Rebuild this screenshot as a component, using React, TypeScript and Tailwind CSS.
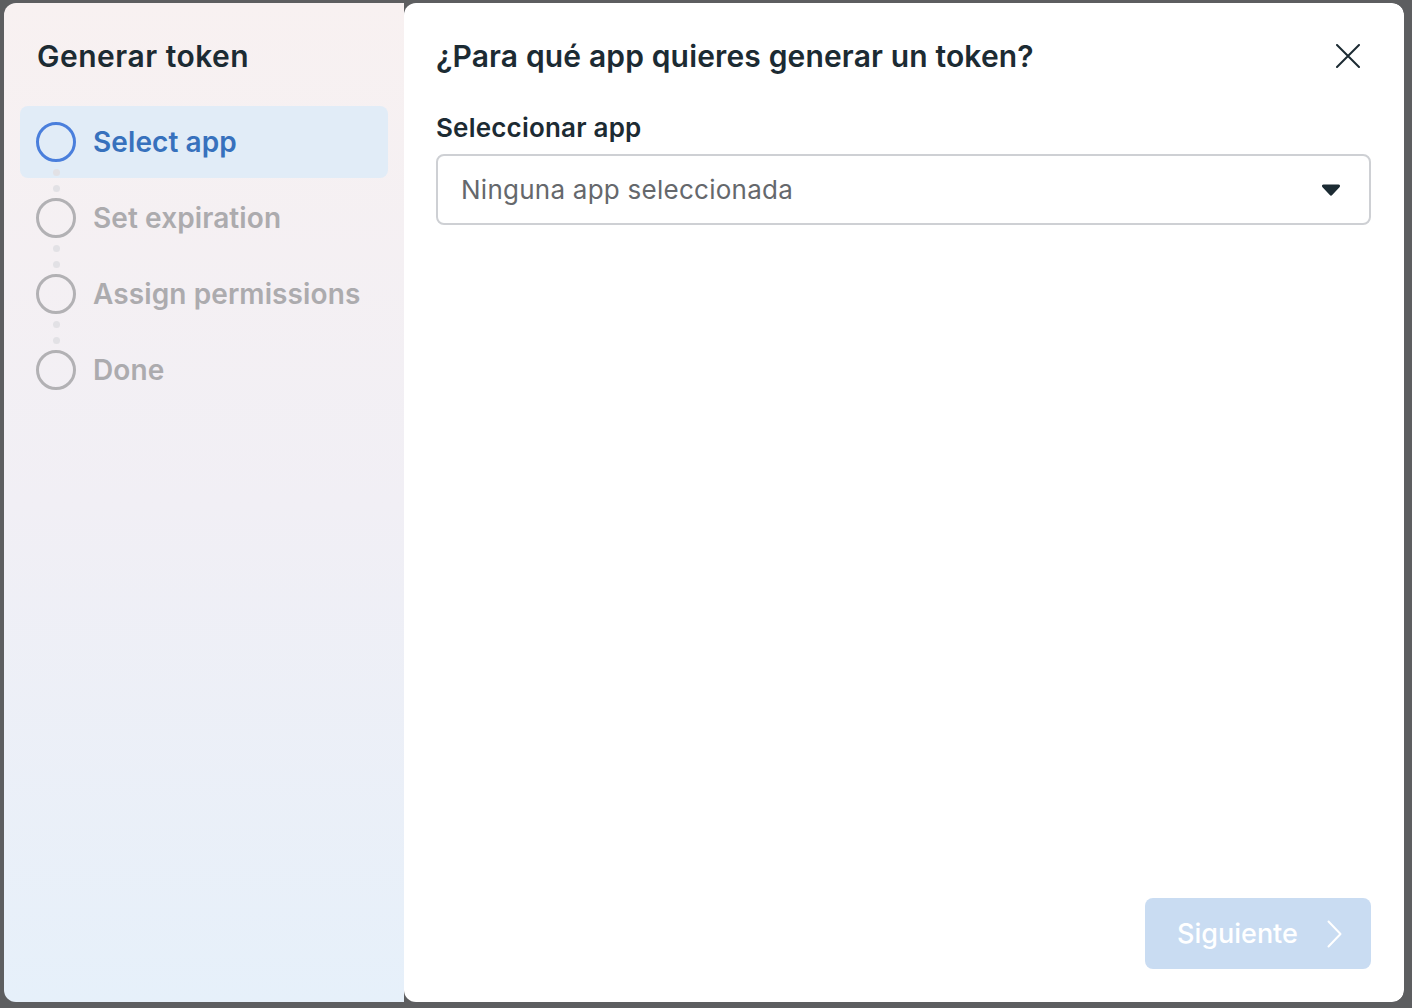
const steps = [
  { name: "Select app", active: true },
  { name: "Set expiration", active: false },
  { name: "Assign permissions", active: false },
  { name: "Done", active: false },
]

function StepRow({ name, active, last }: { name: string; active: boolean; last: boolean }) {
  return (
    <div
      className={`relative flex h-[72px] items-center gap-[17px] rounded-[8px] pl-[16px] ${
        active ? "bg-[#e1ecf7]" : ""
      }`}
    >
      <div
        className={`h-[40px] w-[40px] shrink-0 rounded-full border-[3px] ${
          active ? "border-[#4a7fdc]" : "border-[#b2b1b4]"
        }`}
      />
      <span
        className={`text-[28px] font-semibold leading-[36px] tracking-[0.1px] ${
          active ? "text-[#3771bd]" : "text-[#acabae]"
        }`}
      >
        {name}
      </span>
      {!last && (
        <>
          <div className="absolute left-[33px] top-[63px] h-[7px] w-[7px] rounded-full bg-[#e2e1e5]" />
          <div className="absolute left-[33px] top-[79px] h-[7px] w-[7px] rounded-full bg-[#e2e1e5]" />
        </>
      )}
    </div>
  )
}

export default function App() {
  return (
    <div
      className="h-screen w-full bg-[#5d5e60] pl-[4px] pt-[3px]"
      style={{ fontFamily: "Inter, 'Noto Sans', sans-serif" }}
    >
      <div className="flex h-[999px] w-[1400px] overflow-hidden rounded-[12px]">
        {/* steps */}
        <div className="flex w-[400px] shrink-0 flex-col bg-linear-to-b from-[#f8f1f1] via-[#f1eff5] to-[#e6f0fa] px-[16px] pt-[35px]">
          <h2 className="pl-[17px] text-[30px] font-semibold leading-[36px] tracking-[0.5px] text-[#1c2b33]">
            Generar token
          </h2>
          <div className="mt-[32px] flex w-[368px] flex-col gap-[4px]">
            {steps.map((s, i) => (
              <StepRow key={s.name} name={s.name} active={s.active} last={i === steps.length - 1} />
            ))}
          </div>
        </div>

        {/* content */}
        <div className="flex flex-1 flex-col rounded-[12px] bg-white pb-[33px] pl-[32px] pr-[33px] pt-[35px]">
          <div className="flex items-center justify-between">
            <h1 className="text-[30px] font-semibold leading-[36px] tracking-[0.15px] text-[#1c2b33]">
              ¿Para qué app quieres generar un token?
            </h1>
            <button className="mr-[9px] flex h-[28px] w-[28px] items-center justify-center text-[#1c2b33]">
              <svg width="24" height="24" viewBox="0 0 24 24" fill="none" stroke="currentColor" strokeWidth="2" strokeLinecap="round">
                <path d="M1 1L23 23M23 1L1 23" />
              </svg>
            </button>
          </div>
          <label className="mt-[38px] text-[26px] font-semibold leading-[32px] tracking-[0.2px] text-[#1c2b33]">
            Seleccionar app
          </label>
          <div className="mt-[10px] flex h-[71px] items-center justify-between rounded-[8px] border-2 border-[#ced0d4] pl-[23px] pr-[28px]">
            <span className="text-[26px] leading-[34px] tracking-[0.25px] text-[#65686c]">Ninguna app seleccionada</span>
            <svg width="20" height="14" viewBox="0 0 20 14" className="text-[#1c2b33]">
              <path d="M2.5 1.5h15c1.3 0 2 1.4 1.2 2.4l-7.5 8.2c-.6.7-1.8.7-2.4 0L1.3 3.9C.5 2.9 1.2 1.5 2.5 1.5z" fill="currentColor" />
            </svg>
          </div>
          <div className="mt-auto flex justify-end">
            <button className="flex h-[71px] w-[226px] items-center justify-between rounded-[8px] bg-[#c9dcf2] pl-[32px] pr-[29px] text-white">
              <span className="text-[27px] font-medium leading-[34px]">Siguiente</span>
              <svg width="15" height="28" viewBox="0 0 15 28" fill="none" stroke="currentColor" strokeWidth="2" strokeLinecap="round" strokeLinejoin="round">
                <path d="M1.5 1.5L13.5 14L1.5 26.5" />
              </svg>
            </button>
          </div>
        </div>
      </div>
    </div>
  )
}
